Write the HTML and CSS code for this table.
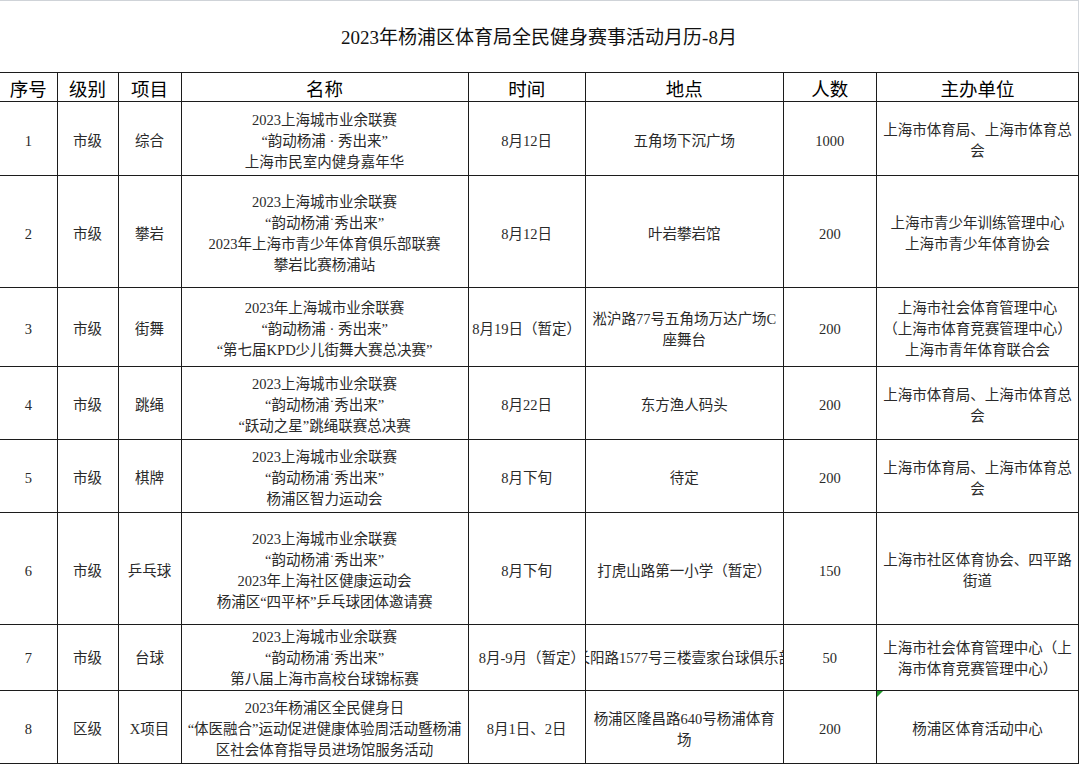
FILE: index.html
```html
<!DOCTYPE html>
<html lang="zh-CN">
<head>
<meta charset="utf-8">
<title>2023年杨浦区体育局全民健身赛事活动月历-8月</title>
<link rel="stylesheet" href="styles.css">
</head>
<body>
<div class="sheet">
  <div class="title">2023年杨浦区体育局全民健身赛事活动月历-8月</div>
  <table class="grid">
    <colgroup>
      <col class="c-no"><col class="c-level"><col class="c-item"><col class="c-name"><col class="c-time"><col class="c-place"><col class="c-count"><col class="c-org">
    </colgroup>
    <thead>
      <tr class="r-head">
        <th>序号</th><th>级别</th><th>项目</th><th>名称</th><th>时间</th><th>地点</th><th>人数</th><th>主办单位</th>
      </tr>
    </thead>
    <tbody>
      <tr class="r1">
        <td>1</td><td>市级</td><td>综合</td>
        <td>2023上海城市业余联赛<br>“韵动杨浦 · 秀出来”<br>上海市民室内健身嘉年华</td>
        <td>8月12日</td><td>五角场下沉广场</td><td>1000</td>
        <td>上海市体育局、上海市体育总<br>会</td>
      </tr>
      <tr class="r2">
        <td>2</td><td>市级</td><td>攀岩</td>
        <td>2023上海城市业余联赛<br>“韵动杨浦˙秀出来”<br>2023年上海市青少年体育俱乐部联赛<br>攀岩比赛杨浦站</td>
        <td>8月12日</td><td>叶岩攀岩馆</td><td>200</td>
        <td>上海市青少年训练管理中心<br>上海市青少年体育协会</td>
      </tr>
      <tr class="r3">
        <td>3</td><td>市级</td><td>街舞</td>
        <td>2023年上海城市业余联赛<br>“韵动杨浦 · 秀出来”<br>“第七届KPD少儿街舞大赛总决赛”</td>
        <td class="tight">8月19日（暂定）</td><td class="tight">淞沪路77号五角场万达广场C<br>座舞台</td><td>200</td>
        <td>上海市社会体育管理中心<br>（上海市体育竞赛管理中心）<br>上海市青年体育联合会</td>
      </tr>
      <tr class="r4">
        <td>4</td><td>市级</td><td>跳绳</td>
        <td>2023上海城市业余联赛<br>“韵动杨浦˙秀出来”<br>“跃动之星”跳绳联赛总决赛</td>
        <td>8月22日</td><td>东方渔人码头</td><td>200</td>
        <td>上海市体育局、上海市体育总<br>会</td>
      </tr>
      <tr class="r5">
        <td>5</td><td>市级</td><td>棋牌</td>
        <td>2023上海城市业余联赛<br>“韵动杨浦˙秀出来”<br>杨浦区智力运动会</td>
        <td>8月下旬</td><td>待定</td><td>200</td>
        <td>上海市体育局、上海市体育总<br>会</td>
      </tr>
      <tr class="r6">
        <td>6</td><td>市级</td><td>乒乓球</td>
        <td>2023上海城市业余联赛<br>“韵动杨浦˙秀出来”<br>2023年上海社区健康运动会<br>杨浦区“四平杯”乒乓球团体邀请赛</td>
        <td>8月下旬</td><td>打虎山路第一小学（暂定）</td><td>150</td>
        <td>上海市社区体育协会、四平路<br>街道</td>
      </tr>
      <tr class="r7">
        <td>7</td><td>市级</td><td>台球</td>
        <td>2023上海城市业余联赛<br>“韵动杨浦˙秀出来”<br>第八届上海市高校台球锦标赛</td>
        <td class="clip"><div class="clip-in start">8月-9月（暂定）</div></td>
        <td class="clip"><div class="clip-in">长阳路1577号三楼壹家台球俱乐部</div></td>
        <td>50</td>
        <td>上海市社会体育管理中心（上<br>海市体育竞赛管理中心）</td>
      </tr>
      <tr class="r8">
        <td>8</td><td>区级</td><td>X项目</td>
        <td>2023年杨浦区全民健身日<br>“体医融合”运动促进健康体验周活动暨杨浦<br>区社会体育指导员进场馆服务活动</td>
        <td>8月1日、2日</td><td>杨浦区隆昌路640号杨浦体育<br>场</td><td>200</td>
        <td class="flag">杨浦区体育活动中心</td>
      </tr>
    </tbody>
  </table>
</div>
</body>
</html>
```
FILE: styles.css
```css
html, body {
  margin: 0;
  padding: 0;
  background: #ffffff;
}

body {
  font-family: "Liberation Serif", "Noto Sans CJK SC", serif;
  color: #222;
}

.sheet {
  width: 1079px;
}

.title {
  height: 72px;
  border-top: 1px solid #cfd3d8;
  border-right: 1px solid #d3d7dc;
  box-sizing: border-box;
  display: flex;
  align-items: center;
  justify-content: center;
  font-size: 19px;
  color: #111;
  padding-bottom: 2px;
}

.grid {
  width: 1079px;
  border-collapse: collapse;
  table-layout: fixed;
}

.c-no { width: 57px; }
.c-level { width: 61px; }
.c-item { width: 63px; }
.c-name { width: 287px; }
.c-time { width: 117px; }
.c-place { width: 198px; }
.c-count { width: 93px; }
.c-org { width: 202px; }

.grid th,
.grid td {
  border: 1px solid #1c1c1c;
  text-align: center;
  vertical-align: middle;
  padding: 5px 4px 0;
  overflow: hidden;
}

.grid th:first-child,
.grid td:first-child {
  border-left: none;
}

.grid th {
  font-size: 18.5px;
  font-weight: normal;
  color: #000;
  line-height: 22px;
}

.grid td {
  font-size: 14.5px;
  line-height: 21px;
  color: #2a2a2a;
}

.grid td.tight {
  padding-left: 1px;
  padding-right: 1px;
}

.grid td.clip {
  padding-left: 0;
  padding-right: 0;
}

.clip-in {
  white-space: nowrap;
  overflow: hidden;
  display: flex;
  justify-content: center;
}

.clip-in.start {
  justify-content: flex-start;
  padding-left: 10px;
}

.grid td.flag {
  position: relative;
}

.grid td.flag::before {
  content: "";
  position: absolute;
  left: 0;
  top: 0;
  width: 0;
  height: 0;
  border-top: 6px solid #1f9a2a;
  border-right: 6px solid transparent;
}

.r-head { height: 29px; }
.r1 { height: 74px; }
.r2 { height: 112px; }
.r3 { height: 79px; }
.r4 { height: 73px; }
.r5 { height: 73px; }
.r6 { height: 112px; }
.r7 { height: 65px; }
.r8 { height: 73px; }

.r7 td {
  padding-top: 2px;
}
```
